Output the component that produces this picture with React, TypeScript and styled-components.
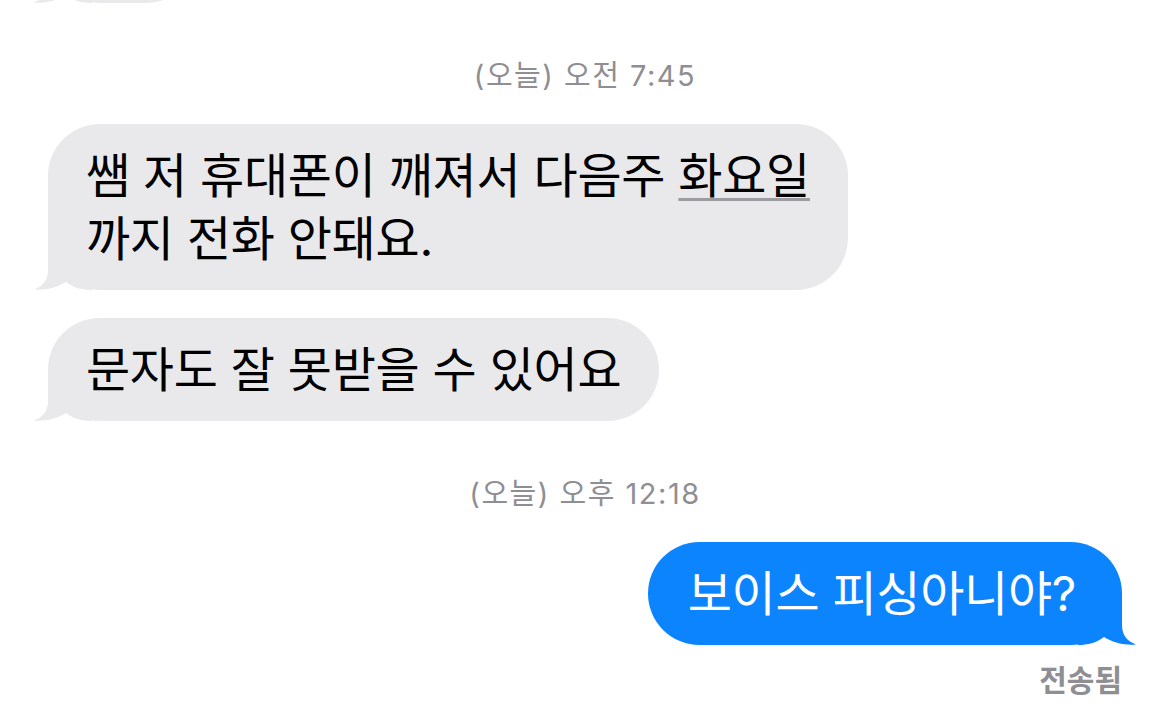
import styled, { createGlobalStyle, css } from "styled-components";

const GlobalStyle = createGlobalStyle`
  html, body {
    margin: 0;
    padding: 0;
    background: #ffffff;
  }
  body {
    font-family: "Inter", "Noto Sans CJK KR", sans-serif;
    -webkit-font-smoothing: antialiased;
    overflow: hidden;
  }
`;

type Side = "them" | "me";

const Thread = styled.div`
  width: 1170px;
  height: 715px;
  box-sizing: border-box;
  padding: 0 48px;
  display: flex;
  flex-direction: column;
  overflow: hidden;
`;

const Row = styled.div<{ $side: Side }>`
  display: flex;
  justify-content: ${(p) => (p.$side === "me" ? "flex-end" : "flex-start")};
`;

const Group = styled.div`
  display: flex;
  flex-direction: column;
  gap: 28px;
`;

const Stamp = styled.div`
  text-align: center;
  font-size: 29px;
  letter-spacing: 1.5px;
  line-height: 34px;
  color: #8e8e93;
  margin: 56px 0 31px;
`;

const Bubble = styled.div<{ $side: Side }>`
  position: relative;
  isolation: isolate;
  box-sizing: border-box;
  border-radius: 52px;
  font-size: 48px;
  line-height: 63px;
  letter-spacing: -0.3px;
  white-space: pre-line;
  ${(p) =>
    p.$side === "me"
      ? css`
          padding: 20px 46px 20px 40px;
          background: #0b84fe;
          color: #ffffff;
        `
      : css`
          padding: 20px 38px;
          background: #e9e9eb;
          color: #000000;
        `}
`;

const Remnant = styled(Bubble)`
  width: 150px;
  height: 103px;
  margin-top: -100px;
`;

const TailSvg = styled.svg<{ $side: Side }>`
  position: absolute;
  bottom: 0;
  width: 60px;
  height: 50px;
  z-index: -1;
  ${(p) =>
    p.$side === "me"
      ? css`
          right: -16px;
          transform: scaleX(-1);
        `
      : css`
          left: -16px;
        `}
`;

const Marked = styled.span`
  text-decoration: underline;
  text-decoration-color: #9c9ca0;
  text-decoration-thickness: 3px;
  text-underline-offset: 5px;
`;

const Status = styled.div`
  align-self: flex-end;
  margin-top: 19px;
  font-size: 30px;
  line-height: 32px;
  font-weight: 600;
  color: #8e8e93;
`;

function Tail({ side }: { side: Side }) {
  return (
    <TailSvg $side={side} viewBox="0 0 60 50">
      <path
        d="M16 0 L16 30 C16 40 11 46 2 49.5 C12 50.5 25 48 34 42 C42 48 50 50 60 50 L60 0 Z"
        fill={side === "me" ? "#0b84fe" : "#e9e9eb"}
      />
    </TailSvg>
  );
}

export default function App() {
  return (
    <>
      <GlobalStyle />
      <Thread>
        <Row $side="them">
          <Remnant $side="them">
            <Tail side="them" />
          </Remnant>
        </Row>

        <Stamp>(오늘) 오전 7:45</Stamp>

        <Group>
          <Row $side="them">
            <Bubble $side="them">
              <Tail side="them" />
              쌤 저 휴대폰이 깨져서 다음주 <Marked>화요일</Marked>
              {"\n"}까지 전화 안돼요.
            </Bubble>
          </Row>
          <Row $side="them">
            <Bubble $side="them">
              <Tail side="them" />
              문자도 잘 못받을 수 있어요
            </Bubble>
          </Row>
        </Group>

        <Stamp>(오늘) 오후 12:18</Stamp>

        <Row $side="me">
          <Bubble $side="me">
            <Tail side="me" />
            보이스 피싱아니야?
          </Bubble>
        </Row>

        <Status>전송됨</Status>
      </Thread>
    </>
  );
}
